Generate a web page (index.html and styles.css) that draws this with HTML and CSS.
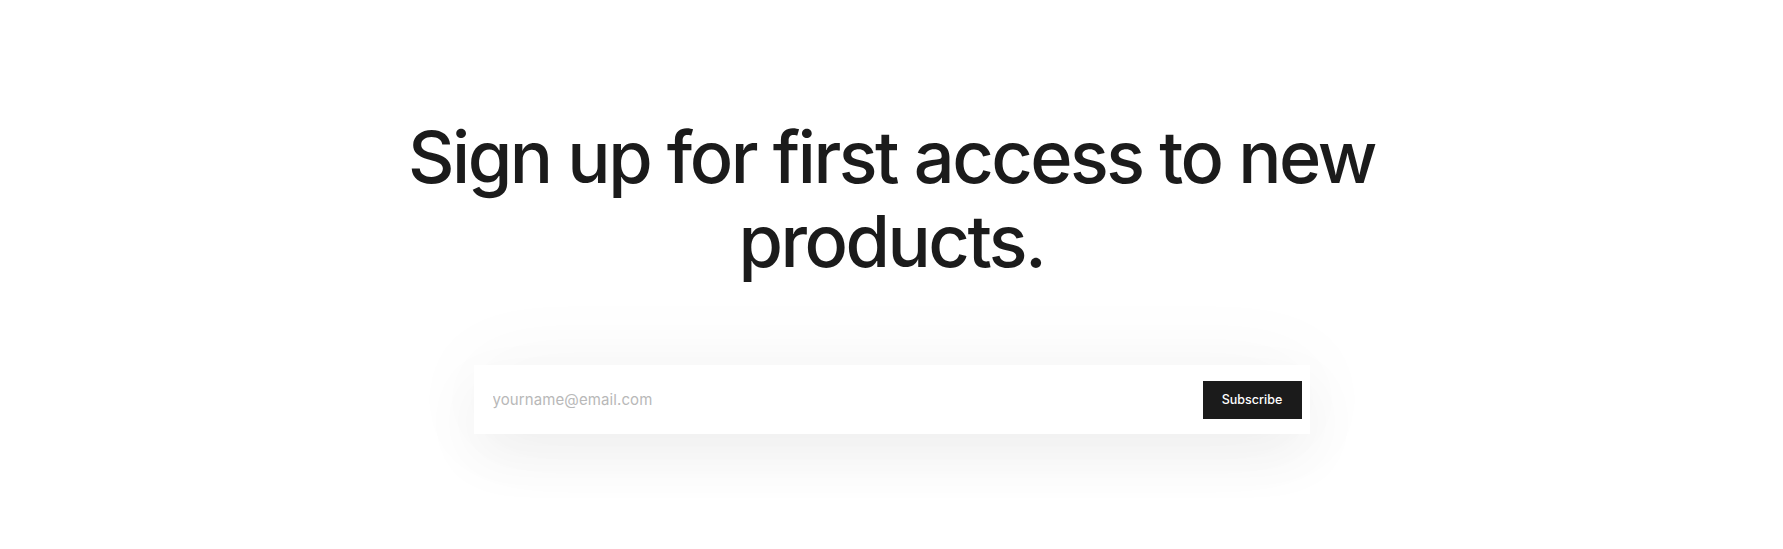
FILE: index.html
```html
<!DOCTYPE html>
<html lang="en">
<head>
<meta charset="utf-8">
<title>Newsletter</title>
<link rel="stylesheet" href="styles.css">
</head>
<body>
<section class="signup">
  <h1 class="signup-title">Sign up for first access to new<br>products.</h1>
  <form class="signup-form" onsubmit="return false;">
    <input class="signup-input" type="email" placeholder="yourname@email.com">
    <button class="signup-button" type="submit">Subscribe</button>
  </form>
</section>
</body>
</html>
```
FILE: styles.css
```css
html, body {
  margin: 0;
  padding: 0;
  background: #ffffff;
}

body {
  font-family: Inter, "Open Sans", "Liberation Sans", sans-serif;
  color: #1b1b1b;
  min-height: 549px;
}

.signup {
  display: flex;
  flex-direction: column;
  align-items: center;
  padding: 115px 0 115px;
}

.signup-title {
  margin: 0;
  font-size: 72px;
  line-height: 84px;
  font-weight: 500;
  letter-spacing: -2.5px;
  text-align: center;
  color: #1b1b1b;
}

.signup-form {
  margin-top: 82px;
  width: 836px;
  height: 69px;
  box-sizing: border-box;
  display: flex;
  align-items: center;
  background: #ffffff;
  padding: 0 8px 0 19px;
  box-shadow: 0 0 90px rgba(0, 0, 0, 0.045), 0 22px 60px rgba(0, 0, 0, 0.05);
}

.signup-input {
  flex: 1;
  border: none;
  outline: none;
  background: transparent;
  font-family: inherit;
  font-size: 15px;
  letter-spacing: 0.1px;
  color: #333;
  padding: 0;
}

.signup-input::placeholder {
  color: #b8b8b8;
}

.signup-button {
  width: 99px;
  height: 38px;
  border: none;
  background: #1b1b1b;
  color: #ffffff;
  font-family: inherit;
  font-size: 12.5px;
  font-weight: 500;
  cursor: pointer;
  padding: 0;
}
```
